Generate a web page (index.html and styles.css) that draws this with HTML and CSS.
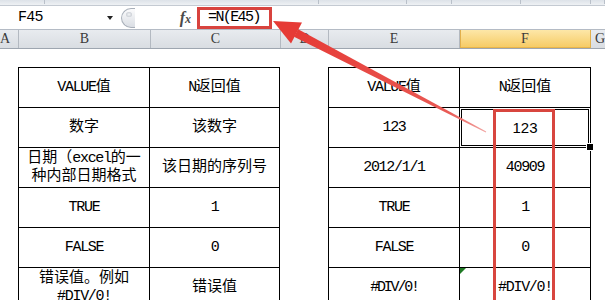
FILE: index.html
```html
<!DOCTYPE html>
<html lang="zh-CN">
<head>
  <meta charset="UTF-8">
  <title>N函数</title>
  <link rel="stylesheet" href="styles.css">
</head>
<body>
<div class="app">

  <!-- bottom edge of the ribbon -->
  <div class="ribbon-edge">
    <span></span><span></span><span></span><span></span><span></span><span></span><span></span>
  </div>

  <!-- name box + formula bar -->
  <div class="formula-bar">
    <div class="name-box"><span>F45</span><i class="drop"></i></div>
    <div class="splitter"><b></b></div>
    <div class="fx"><i>f</i><span>x</span></div>
    <div class="formula"><div class="formula-box">=N(E45)</div></div>
  </div>

  <!-- column letters -->
  <div class="col-heads">
    <div class="ca">A</div>
    <div class="cb">B</div>
    <div class="cc">C</div>
    <div class="cd">D</div>
    <div class="ce">E</div>
    <div class="cf active">F</div>
    <div class="cg">G</div>
  </div>

  <div class="sheet">
    <div class="tbl">
      <div class="cell"><p><span class="lat">VALUE</span>值</p></div>
      <div class="cell"><p><span class="lat">N</span>返回值</p></div>
      <div class="cell"><p>数字</p></div>
      <div class="cell"><p>该数字</p></div>
      <div class="cell"><p>日期（<span class="lat">excel</span>的一<br>种内部日期格式</p></div>
      <div class="cell"><p>该日期的序列号</p></div>
      <div class="cell lat"><p>TRUE</p></div>
      <div class="cell lat"><p>1</p></div>
      <div class="cell lat"><p>FALSE</p></div>
      <div class="cell lat"><p>0</p></div>
      <div class="cell"><p>错误值。例如<br><span class="lat">#DIV/0!</span></p></div>
      <div class="cell"><p>错误值</p></div>
    </div>

    <div class="tbl right">
      <div class="cell"><p><span class="lat">VALUE</span>值</p></div>
      <div class="cell"><p><span class="lat">N</span>返回值</p></div>
      <div class="cell lat"><p>123</p></div>
      <div class="cell sans selected"><p>123</p></div>
      <div class="cell lat"><p>2012/1/1</p></div>
      <div class="cell lat"><p>40909</p></div>
      <div class="cell lat"><p>TRUE</p></div>
      <div class="cell lat"><p>1</p></div>
      <div class="cell lat"><p>FALSE</p></div>
      <div class="cell lat"><p>0</p></div>
      <div class="cell lat tight"><p>#DIV/0!</p></div>
      <div class="cell lat err"><p>#DIV/0!</p></div>
    </div>
  </div>

  <!-- annotations -->
  <div class="mark-col"></div>
  <svg class="arrow" width="605" height="300" viewBox="0 0 605 300">
    <defs>
      <linearGradient id="fade" x1="296" y1="33" x2="486" y2="132" gradientUnits="userSpaceOnUse">
        <stop offset="0" stop-color="#e63b36"/>
        <stop offset="0.8" stop-color="#e95a55"/>
        <stop offset="1" stop-color="#f2a5a2"/>
      </linearGradient>
    </defs>
    <polygon points="298.2,29.2 486.2,131.6 485.8,132.4 294,36.8" fill="url(#fade)"/>
    <polygon points="273,21 302,22.5 291,43.5" fill="#e63b36"/>
  </svg>
</div>
</body>
</html>
```

FILE: styles.css
```css
* { box-sizing: border-box; }
body {
  margin: 0;
  background: #fff;
  font-family: "Liberation Mono", "Noto Sans CJK SC", monospace;
  color: #000;
}
.app {
  position: relative;
  width: 605px;
  height: 300px;
  overflow: hidden;
}

/* ribbon edge */
.ribbon-edge {
  display: grid;
  grid-template-columns: 45px 274px 88px 45px 69px 70px 1fr;
  height: 6px;
  background: linear-gradient(#dde2e8, #eef1f4);
  border-bottom: 1px solid #c4cad2;
}
.ribbon-edge span {
  height: 4px;
  border-right: 1px solid #b9c0c9;
}

/* formula bar */
.formula-bar {
  display: flex;
  height: 24px;
  background: #fff;
  border-bottom: 1px solid #b4bbc5;
}
.name-box {
  width: 118px;
  display: flex;
  align-items: center;
  padding-left: 18px;
  font-size: 15px;
  letter-spacing: -0.7px;
}
.name-box .drop {
  margin-left: auto;
  margin-right: 5px;
  border-left: 3px solid transparent;
  border-right: 3px solid transparent;
  border-top: 4px solid #222;
}
.splitter {
  position: relative;
  width: 14px;
  height: 20px;
  margin: 2px 0 0 3px;
  border: 1px solid #a9b0ba;
  border-right: none;
  border-radius: 10px 0 0 10px;
  background: linear-gradient(#fbfbfc, #dadee4);
}
.splitter b {
  position: absolute;
  left: 4px;
  top: 3px;
  width: 6px;
  height: 5px;
  border-radius: 50%;
  background: radial-gradient(#f5f6f8, #b7bdc5);
}
.fx {
  width: 62px;
  display: flex;
  align-items: center;
  justify-content: flex-end;
  padding-right: 6px;
  font-family: "Liberation Serif", serif;
  font-weight: bold;
  color: #4a4a4a;
}
.fx i { font-size: 16px; }
.fx span { font-size: 12px; font-style: italic; margin-top: 3px; }
.formula { flex: 1; }
.formula-box {
  width: 75px;
  height: 22px;
  margin-top: 1px;
  padding-left: 8px;
  border: 3px solid #d8433e;
  font-size: 15px;
  line-height: 16px;
  letter-spacing: -1.6px;
}

/* column letters */
.col-heads {
  display: flex;
  height: 19px;
  margin-left: -8px;
  background: linear-gradient(#e8ebef, #d9dde2);
  border-bottom: 1px solid #9ea6b0;
  font-family: "Liberation Serif", serif;
  font-size: 14px;
  line-height: 18px;
  color: #3a3a3a;
}
.col-heads div {
  flex: none;
  text-align: center;
  border-right: 1px solid #b3b9c1;
}
.col-heads .ca { width: 27px; }
.col-heads .cb { width: 132px; }
.col-heads .cc { width: 130px; }
.col-heads .cd { width: 48px; }
.col-heads .ce { width: 131px; }
.col-heads .cf { width: 131px; }
.col-heads .cg { flex: 1; text-align: left; padding-left: 4px; border-right: none; }
.col-heads .active {
  background: linear-gradient(#fde7a8, #f6ca62);
  border-right-color: #e2b04c;
  box-shadow: inset 1px 0 #e2b04c, inset 0 -1px #e9b54a;
}

/* sheet and tables */
.sheet {
  display: flex;
  padding-top: 18px;
}
.tbl {
  display: grid;
  grid-template-columns: 131px 130px;
  margin-left: 18px;
  border-left: 1px solid #000;
  border-top: 1px solid #000;
}
.tbl.right {
  grid-template-columns: 131px 131px;
  margin-left: 48px;
}
.cell {
  position: relative;
  height: 40px;
  display: flex;
  align-items: center;
  justify-content: center;
  text-align: center;
  border-right: 1px solid #000;
  border-bottom: 1px solid #000;
  font-size: 15px;
  line-height: 18px;
}
.cell p {
  margin: 0;
  white-space: nowrap;
}
.lat { letter-spacing: -1.3px; }
.tight { letter-spacing: -2.2px; }
.sans { font-family: "Liberation Sans", sans-serif; letter-spacing: 0; }

/* active cell with fill handle */
.selected::after {
  content: "";
  position: absolute;
  top: -1px;
  left: -1px;
  right: -1px;
  bottom: -1px;
  border: 1px solid #000;
  box-shadow: inset 0 0 0 1px #fff, inset 0 0 0 2px #000;
}
.selected::before {
  content: "";
  position: absolute;
  right: -4px;
  bottom: -4px;
  width: 6px;
  height: 6px;
  background: #000;
  border: 1px solid #fff;
  z-index: 1;
}

/* green error marker */
.err::before {
  content: "";
  position: absolute;
  top: 0;
  left: 0;
  border-top: 6px solid #1f7a24;
  border-right: 6px solid transparent;
}

/* red highlight over column F */
.mark-col {
  position: absolute;
  left: 493px;
  top: 109px;
  width: 62px;
  height: 220px;
  border: 3px solid #d8463f;
}
.arrow {
  position: absolute;
  left: 0;
  top: 0;
}
```
